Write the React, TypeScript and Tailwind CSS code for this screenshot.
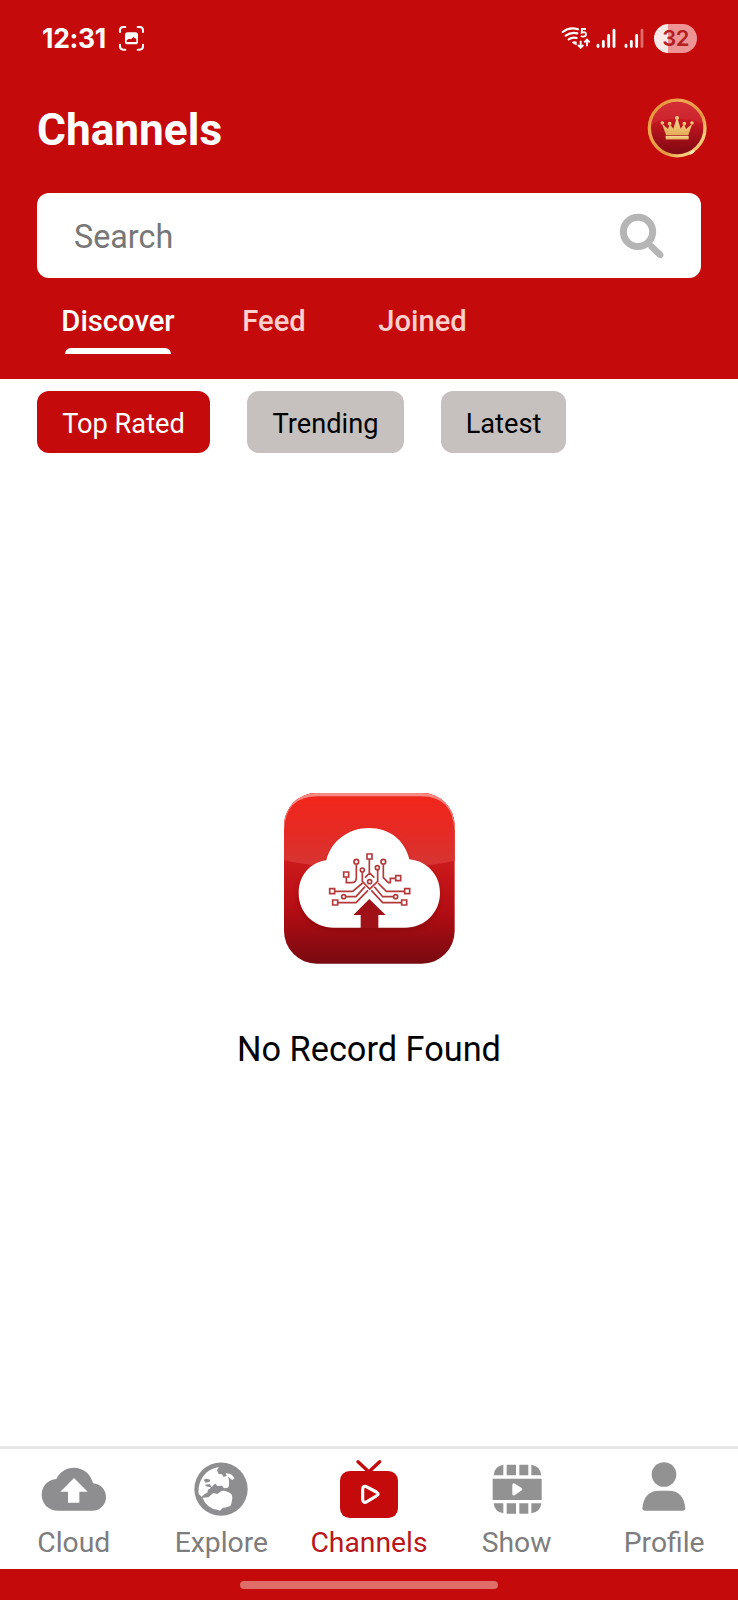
import type { ReactNode } from "react";

const tabs = [
  { label: "Discover", active: true, cell: "ml-[23px] w-[116px]" },
  { label: "Feed", active: false, cell: "ml-[65px] w-[66px]" },
  { label: "Joined", active: false, cell: "ml-[69px] w-[93px]" },
];

const filters = [
  { label: "Top Rated", style: "w-[173px] bg-[#c40a0b] text-white" },
  { label: "Trending", style: "w-[157px] bg-[#c6c0bf] text-black" },
  { label: "Latest", style: "w-[125px] bg-[#c6c0bf] text-black" },
];

function CaptureIcon() {
  return (
    <svg className="ml-[13px] h-[25px] w-[25px]" viewBox="297 47 75 75" fill="none">
      <path d="M300 65v-5q0-10 10-10h6M353 50h6q10 0 10 10v5M369 103v5q0 10-10 10h-6M316 118h-6q-10 0-10-10v-5" stroke="#fff" strokeWidth="6" strokeLinecap="round" />
      <rect x="315" y="66" width="39" height="36" rx="8" fill="#fff" />
      <path d="M320 95v-5l7-5 6 2 7-7 9 6v9z" fill="#c40a0b" />
    </svg>
  );
}

function WifiIcon() {
  return (
    <svg className="h-[24px] w-[30px]" viewBox="63 48 90 72" fill="none">
      <g stroke="#fff" strokeWidth="6.5" strokeLinecap="round">
        <path d="M68 66q21-17 46-8" />
        <path d="M77 77q16-12 35-7" />
        <path d="M86 88q11-8 24-4" />
      </g>
      <path d="M95 97q7-6 15-2v11q-8-1-15-9z" fill="#fff" />
      <path d="M138 57h-12l-1 11q13-4 13 5 0 7-8 7-5 0-7-3" stroke="#fff" strokeWidth="5.5" />
      <path d="M122 92v20M114 105l8 8 8-8M141 109V91M133 97l8-8 8 8" stroke="#fff" strokeWidth="5.5" />
    </svg>
  );
}

function SignalIcon({ weak = false }: { weak?: boolean }) {
  return (
    <svg className="h-[21px] w-[20px]" viewBox="0 0 60 62" fill="none" stroke="#fff" strokeWidth="8.5" strokeLinecap="round">
      <path d="M6 51v4M22 40v15M38 22v33" />
      <path d="M54 6v49" opacity={weak ? 0.4 : 1} />
    </svg>
  );
}

function Battery() {
  return (
    <div className="ml-[10px] flex h-[29px] w-[43px] items-center justify-center overflow-hidden rounded-full bg-[linear-gradient(90deg,#fbe9e7_0_33%,#ee9495_33%)] font-[Inter] text-[22px] leading-[29px] font-semibold tracking-[-0.5px] text-[#b3201f]">
      32
    </div>
  );
}

function CrownBadge() {
  return (
    <svg className="h-[60px] w-[60px]" viewBox="49 37 180 180">
      <defs>
        <linearGradient id="badgeRing" x1="0" y1="0" x2="1" y2="1">
          <stop offset="0" stopColor="#e08a34" />
          <stop offset=".3" stopColor="#f0a850" />
          <stop offset=".62" stopColor="#e69540" />
          <stop offset=".82" stopColor="#f7d080" />
          <stop offset="1" stopColor="#d98830" />
        </linearGradient>
        <linearGradient id="badgeFill" x1="0" y1="0" x2="0" y2="1">
          <stop offset="0" stopColor="#cf2630" />
          <stop offset=".4" stopColor="#c31620" />
          <stop offset="1" stopColor="#7c0812" />
        </linearGradient>
        <linearGradient id="badgeGold" x1="0" y1="0" x2="0" y2="1">
          <stop offset="0" stopColor="#f6dc9a" />
          <stop offset="1" stopColor="#e5ac55" />
        </linearGradient>
      </defs>
      <circle cx="139.500" cy="127" r="83.500" fill="url(#badgeFill)" stroke="url(#badgeRing)" strokeWidth="10" />
      <path d="M62 118q10-64 77.500-68 67 4 77 68-18-18-77-18t-77.500 18z" fill="#e2474d" opacity=".3" />
      <ellipse cx="184" cy="200" rx="9" ry="4" transform="rotate(-32 184 200)" fill="#fff0bd" />
      <g fill="url(#badgeGold)">
        <path d="M106 148L94 114l18 16 5-15 11 14 11-35 11 35 10-14 6 15 19-16-12 34z" />
        <circle cx="95" cy="112" r="5.500" />
        <circle cx="117" cy="114" r="5.500" />
        <circle cx="139" cy="97" r="6" />
        <circle cx="161" cy="114" r="5.500" />
        <circle cx="184" cy="112" r="5.500" />
        <rect x="105" y="150.500" width="69" height="11" rx="2" />
      </g>
    </svg>
  );
}

function SearchIcon() {
  return (
    <svg className="h-[46px] w-[46px]" viewBox="717 97 138 138" fill="none" stroke="#b5b5b5">
      <circle cx="774" cy="153.500" r="44" strokeWidth="21" />
      <path d="M802 184l11 11" strokeWidth="13" />
      <path d="M812 195l29 28" strokeWidth="19" />
      <path d="M815 198l26 25" strokeWidth="19" strokeLinecap="round" />
    </svg>
  );
}

function AppLogo() {
  return (
    <svg className="h-[172px] w-[172px]" viewBox="38 35 516 516">
      <defs>
        <linearGradient id="logoBase" x1="0" y1="0" x2="0" y2="1">
          <stop offset="0" stopColor="#f5281d" />
          <stop offset=".4" stopColor="#cc1a1c" />
          <stop offset=".7" stopColor="#b20d14" />
          <stop offset="1" stopColor="#780a10" />
        </linearGradient>
        <linearGradient id="logoGloss" x1="0" y1="0" x2="0" y2="1">
          <stop offset="0" stopColor="#f3261b" />
          <stop offset=".5" stopColor="#e62a24" />
          <stop offset="1" stopColor="#d53634" />
        </linearGradient>
        <clipPath id="logoClip">
          <rect x="41" y="38" width="512" height="512" rx="98" />
        </clipPath>
        <filter id="logoShadow" x="-10%" y="-10%" width="120%" height="130%">
          <feGaussianBlur stdDeviation="8" />
        </filter>
      </defs>
      <g clipPath="url(#logoClip)">
        <path d="M38 35h516v516H38z" fill="url(#logoBase)" />
        <path d="M38 35h516v206q-100 22-257 22T38 238z" fill="url(#logoGloss)" />
        <path d="M36 150V33h522v117h-6q-4-102-100-102H141q-96 0-100 102z" fill="#f58a84" />
        <path d="M168 247c14-60 66-102 128-102s108 36 121 91c51 5 92 46 92 101 0 60-46 105-105 105H190c-60 0-105-45-105-103 0-54 35-89 83-92z" fill="#600" opacity=".3" filter="url(#logoShadow)" transform="translate(0 9)" />
      </g>
      <path d="M168 240c14-58 66-97 128-97s108 37 121 94c51 5 92 45 92 100 0 60-46 105-105 105H190c-60 0-105-45-105-103 0-54 35-93 83-99z" fill="#fff" />
      <path d="M297 356l49 48h-22v40h-53v-40h-22z" fill="#a01117" />
      <g fill="none" stroke="#b3393b" strokeWidth="5">
        <path d="M297 237v44M298 278l-14 14M298 278l14 14M258 252v40q0 15-15 15h-15v-17M276 276v27l22 23 24-23v-34M339 252v40l15 15h6v-13h15" />
        <path d="M193 333h54l30-25M227 349h30l27-30M203 367h54l36-37M402 333h-54l-25-25M369 349h-32l-25-30M394 367h-57l-34-37" />
        <circle cx="258" cy="244" r="7" />
        <circle cx="276" cy="269" r="6" />
        <circle cx="321" cy="262" r="6" />
        <circle cx="339" cy="244" r="7" />
        <circle cx="220" cy="349" r="6" />
        <circle cx="376" cy="349" r="6" />
        <circle cx="298" cy="304" r="6" />
        <path d="M290 221h15v15h-15zM220 275h15v15h-15zM376 286h15v15h-15zM178 325h15v15h-15zM187 359h15v15h-15zM403 325h15v15h-15zM394 359h15v15h-15z" />
      </g>
    </svg>
  );
}

function CloudIcon() {
  return (
    <svg className="h-[66px] w-[66px]" viewBox="123 78 198 198">
      <path d="M169 147c9-20 29-34 53-34 28 0 50 19 57 47 22 2 39 18 39 41 0 24-18 41-41 41H174c-28 0-49-21-49-48 0-26 19-45 44-47z" fill="#8e8e90" />
      <path d="M222 144l41 41h-25v33h-34v-33h-23z" fill="#fff" />
    </svg>
  );
}

function GlobeIcon() {
  return (
    <svg className="h-[66px] w-[66px]" viewBox="566 78 198 198">
      <circle cx="665" cy="177.500" r="80" fill="#8e8e90" />
      <g fill="#fff">
        <path d="M598 192c-3-42 22-76 61-80l-6 9 5 11 10 1 5 8 9-3-3-10 7 3c-1 9 1 13 3 19v18l-5 6-10 1-6-8-14 1-5-7-6 3-8 10-9 5-2 9-8 4-9 8z" />
        <path d="M688 130l10 5 8 10-7 5-9-6-6-7z" />
        <path d="M609 203l18-1 15-13 12 3 12-9q12-3 19 3 14 3 14 17-1 15-5 24-13 6-24 7l-8 8-8-3q-30-3-45-36z" />
      </g>
      <path d="M613 149l8-3 12 3-2 6-12 3zM617 164l14-2 6 9 14-1-9 13h-9l1-11-14-3z" fill="#8e8e90" />
    </svg>
  );
}

function TvIcon() {
  return (
    <svg className="h-[66px] w-[66px]" viewBox="138 78 198 198" fill="none">
      <path d="M204 95l29 27M269 95l-29 27" stroke="#c40a0b" strokeWidth="10" strokeLinecap="round" />
      <rect x="150" y="123" width="174" height="141" rx="29" fill="#c40a0b" />
      <path d="M218 178c0-9 6-11 13-7l28 15c7 4 7 8 0 12l-28 17c-7 4-13 2-13-7z" stroke="#fff" strokeWidth="9.500" />
    </svg>
  );
}

function FilmIcon() {
  return (
    <svg className="h-[66px] w-[66px]" viewBox="580 78 198 198" fill="#929293">
      <path d="M609 136q2-28 29-32v32zM648 104h28v32h-28zM686 104h27v32h-27zM722 104q27 4 30 32h-30zM606 146h147v64H606zM609 220h29v30q-26-3-29-30zM648 220h28v31h-28zM686 220h27v31h-27zM722 220h30q-3 27-30 30z" />
      <path d="M665 166q0-9 8-5l20 13q4 4 0 7l-20 14q-8 5-8-5z" fill="#fff" />
    </svg>
  );
}

function PersonIcon() {
  return (
    <svg className="h-[66px] w-[66px]" viewBox="274 78 198 198" fill="#929293">
      <circle cx="373" cy="133.500" r="37" />
      <path d="M308 235q5-53 51-53h28q45 0 50 53 0 7-7 7H315q-7 0-7-7z" />
    </svg>
  );
}

function NavItem({ label, icon, active = false }: { label: string; icon: ReactNode; active?: boolean }) {
  return (
    <button className="flex flex-1 flex-col items-center pt-[7px]">
      {icon}
      <span className={active ? "mt-[3px] text-[28.3px] leading-[36px] text-[#b9171b]" : "mt-[3px] text-[28.3px] leading-[36px] text-[#7d7d7d]"}>{label}</span>
    </button>
  );
}

export default function App() {
  return (
    <div className="flex h-[1600px] w-[738px] flex-col overflow-hidden bg-white font-[Roboto,sans-serif]">
      <header className="flex h-[379px] shrink-0 flex-col bg-[#c40a0b] text-white">
        <div className="flex h-[76px] items-center pr-[41px] pl-[42px]">
          <span className="font-[Inter] text-[26.5px] leading-[32px] font-bold tracking-[-0.3px]">12:31</span>
          <CaptureIcon />
          <div className="ml-auto flex items-center">
            <WifiIcon />
            <div className="ml-[5px] flex gap-[8px]">
              <SignalIcon />
              <SignalIcon weak />
            </div>
            <Battery />
          </div>
        </div>
        <div className="flex h-[104px] items-center justify-between pr-[31px] pl-[37px]">
          <h1 className="pt-[4px] text-[44.2px] leading-[52px] font-bold">Channels</h1>
          <CrownBadge />
        </div>
        <div className="mx-[37px] mt-[13px] flex h-[85px] shrink-0 items-center justify-between rounded-[12px] bg-white pr-[36px] pl-[37px]">
          <span className="pt-[2px] text-[32.3px] leading-[40px] text-[#777]">Search</span>
          <SearchIcon />
        </div>
        <nav className="flex pt-[24px] pl-[37px]">
          {tabs.map((tab) => (
            <div key={tab.label} className={`flex flex-col items-center ${tab.cell}`}>
              <span className={tab.active ? "text-[29.2px] leading-[38px] font-medium" : "text-[29.2px] leading-[38px] font-medium text-[#ffd0cc]"}>{tab.label}</span>
              {tab.active && <span className="mt-[8px] h-[6px] w-[106px] rounded-t-[6px] bg-white" />}
            </div>
          ))}
        </nav>
      </header>
      <main className="flex grow flex-col">
        <div className="flex gap-[37px] pt-[12px] pl-[37px]">
          {filters.map((f) => (
            <button key={f.label} className={`flex h-[62px] items-center justify-center rounded-[12px] pt-[3px] text-[27.2px] leading-[36px] ${f.style}`}>
              {f.label}
            </button>
          ))}
        </div>
        <div className="mt-[339px] flex flex-col items-center">
          <AppLogo />
          <p className="mt-[64px] text-[34.3px] leading-[42px] text-black">No Record Found</p>
        </div>
      </main>
      <nav className="flex h-[123px] shrink-0 border-t-[3px] border-[#e6e6e6]">
        <NavItem label="Cloud" icon={<CloudIcon />} />
        <NavItem label="Explore" icon={<GlobeIcon />} />
        <NavItem label="Channels" icon={<TvIcon />} active />
        <NavItem label="Show" icon={<FilmIcon />} />
        <NavItem label="Profile" icon={<PersonIcon />} />
      </nav>
      <footer className="flex h-[31px] shrink-0 justify-center bg-[#c40a0b] pt-[12px]">
        <div className="h-[8px] w-[258px] rounded-full bg-[#df6e6b]" />
      </footer>
    </div>
  );
}
